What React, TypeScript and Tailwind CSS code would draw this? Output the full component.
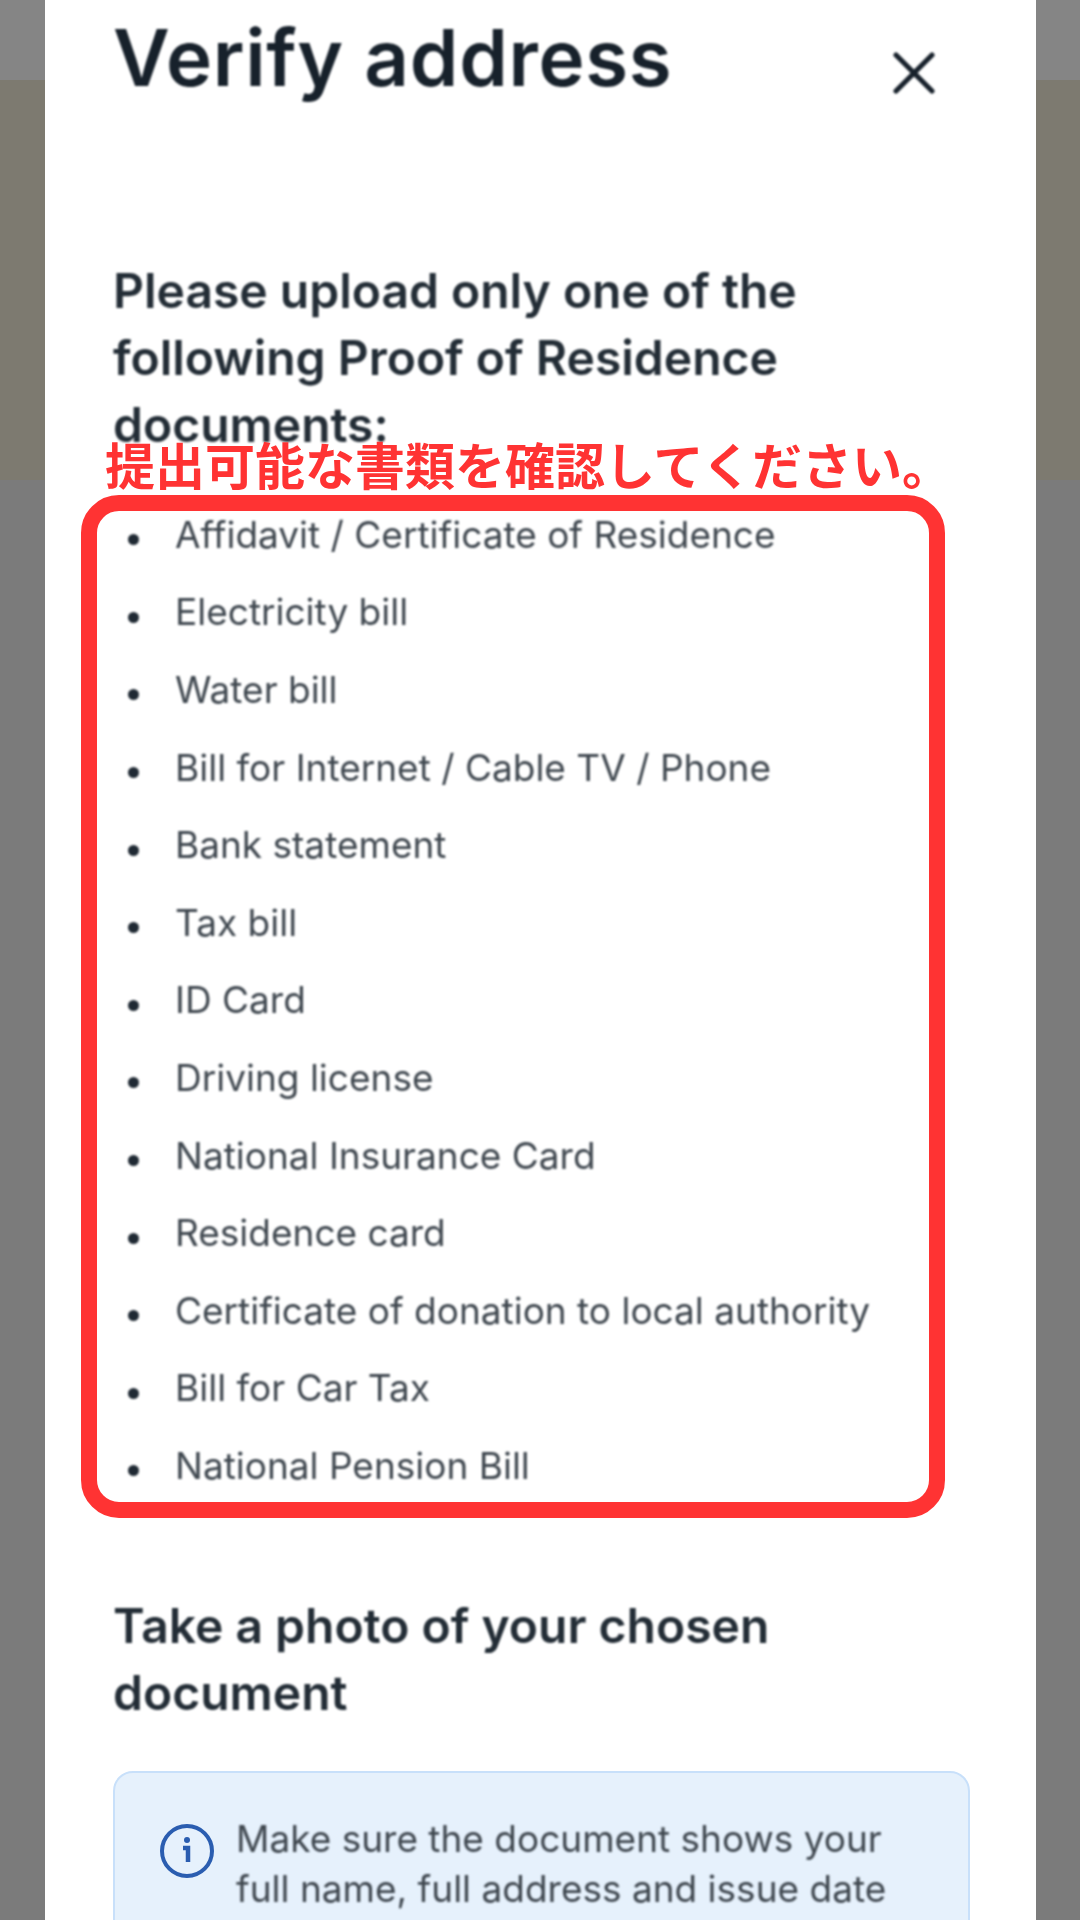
import { X } from "lucide-react";

const documents = [
  "Affidavit / Certificate of Residence",
  "Electricity bill",
  "Water bill",
  "Bill for Internet / Cable TV / Phone",
  "Bank statement",
  "Tax bill",
  "ID Card",
  "Driving license",
  "National Insurance Card",
  "Residence card",
  "Certificate of donation to local authority",
  "Bill for Car Tax",
  "National Pension Bill",
];

export default function App() {
  return (
    <div className="relative h-[1920px] w-[1080px] overflow-hidden font-['Inter',sans-serif]">
      {/* Dimmed page behind the modal */}
      <div className="flex h-full flex-col bg-[#7b7b7b]">
        <div className="h-[80px] bg-[#858585]" />
        <div className="h-[400px] bg-[#7d7a70]" />
      </div>

      {/* Modal */}
      <div className="absolute left-[45px] top-0 h-full w-[991px] bg-white pl-[68px] pr-[66px]">
        <div className="flex h-[200px] items-start justify-between blur-[1px]">
          <h1 className="mt-[15px] text-[78px] font-semibold leading-[86px] tracking-[0.7px] text-[#17212b]">
            Verify address
          </h1>
          <X
            className="mr-[20px] mt-[37px] text-[#17212b]"
            size={72}
            strokeWidth={1.7}
          />
        </div>

        <h2 className="mt-[57px] w-[800px] text-[48px] font-semibold leading-[67px] text-[#232d36] blur-[1px]">
          Please upload only one of the following Proof of Residence documents:
        </h2>

        <ul className="mt-[38px] flex flex-col blur-[0.8px]">
          {documents.map((doc) => (
            <li key={doc} className="flex h-[77.6px] items-center text-[#3f474f]">
              <span className="ml-[15px] mt-[10px] h-[11px] w-[11px] shrink-0 rounded-full bg-[#1f2933]" />
              <span className="ml-[36px] text-[37px] leading-[50px]">{doc}</span>
            </li>
          ))}
        </ul>

        <h2 className="mt-[87px] w-[760px] text-[48px] font-semibold leading-[67px] text-[#232d36] blur-[1px]">
          Take a photo of your chosen document
        </h2>

        <div className="mt-[45px] flex h-[300px] gap-[21px] rounded-[20px] border-2 border-[#c8e0fa] bg-[#e6f1fc] pl-[44px] pr-[50px] pt-[41px]">
          <svg
            viewBox="0 0 56 56"
            className="mt-[9px] h-[56px] w-[56px] shrink-0 fill-none stroke-[#2a5db0] blur-[0.7px]"
            strokeWidth="4"
          >
            <circle cx="28" cy="28" r="25" />
            <circle cx="28" cy="17" r="3" fill="#2a5db0" stroke="none" />
            <path d="M24 25h5v14" strokeWidth="4.5" />
          </svg>
          <p className="text-[37px] leading-[50px] text-[#3f474f] blur-[1px]">
            Make sure the document shows your full name, full address and issue date
          </p>
        </div>
      </div>

      {/* Red annotation over the screenshot */}
      <p className="absolute left-[105px] top-[429px] whitespace-nowrap font-['Noto_Sans_CJK_JP',sans-serif] text-[50px] font-bold leading-[68px] text-[#ff3333]">
        提出可能な書類を確認してください。
      </p>
      <div className="absolute left-[81px] top-[495px] h-[1023px] w-[864px] rounded-[38px] border-[16px] border-[#ff3333]" />
    </div>
  );
}
